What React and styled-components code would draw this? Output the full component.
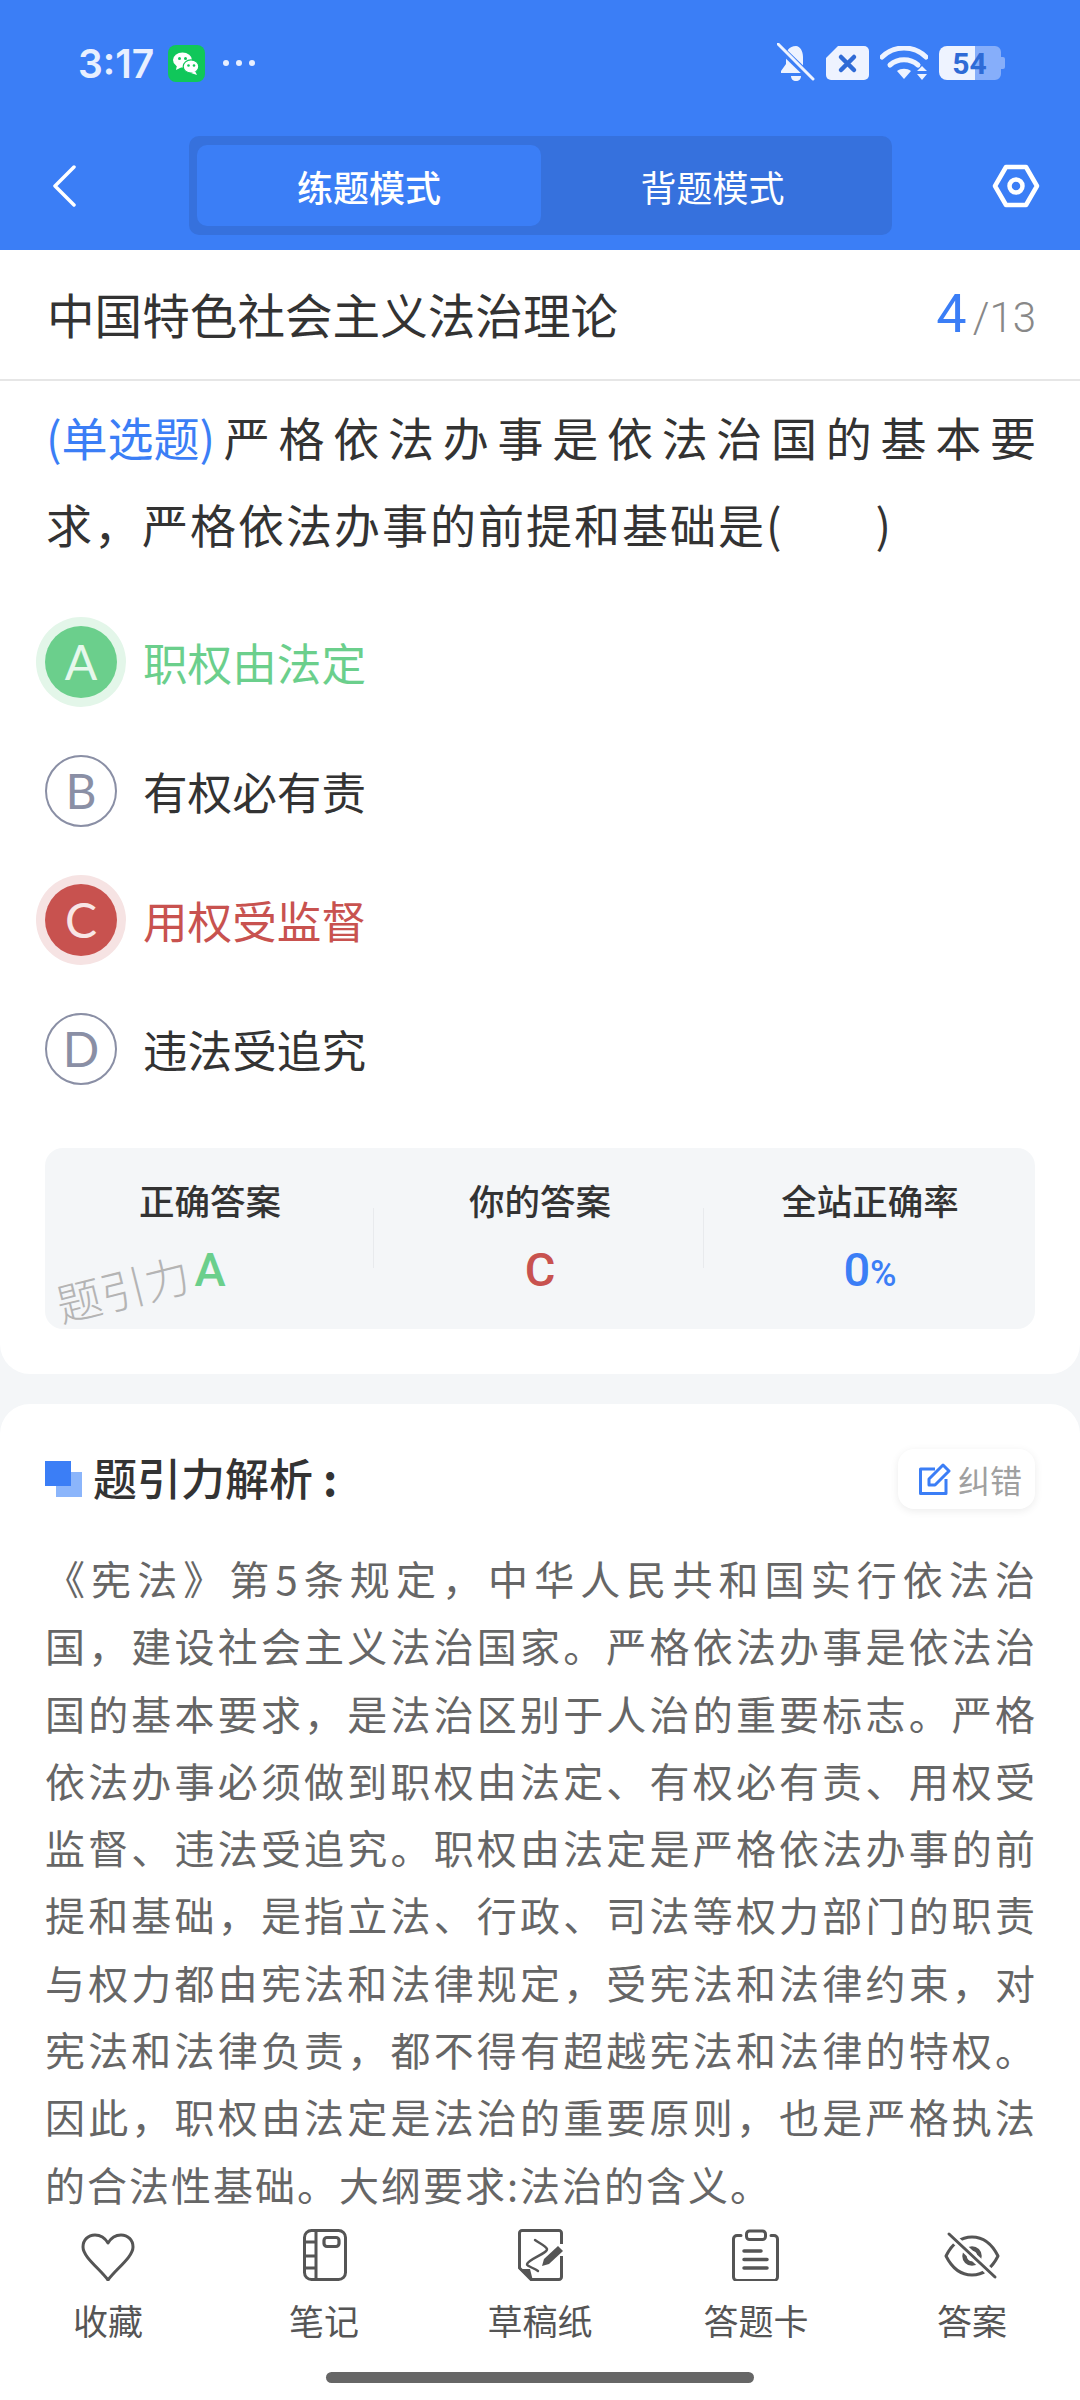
import React from "react";
import styled, { createGlobalStyle } from "styled-components";

const GlobalStyle = createGlobalStyle`
  html, body {
    margin: 0;
    padding: 0;
    background: #f4f6f8;
  }
  * {
    box-sizing: border-box;
  }
`;

const FONT = `"Noto Sans CJK SC", "Noto Sans", sans-serif`;
const BLUE = "#3b7ef6";
const GREEN = "#6bcf8c";
const RED = "#c8524f";

const Page = styled.div`
  width: 1080px;
  height: 2400px;
  display: flex;
  flex-direction: column;
  overflow: hidden;
  font-family: ${FONT};
  color: #333;
  background: #f4f6f8;
`;

const Header = styled.header`
  height: 250px;
  flex: none;
  background: ${BLUE};
  color: #fff;
`;

const StatusBar = styled.div`
  height: 136px;
  padding: 0 75px 10px 78px;
  display: flex;
  align-items: center;
  justify-content: space-between;
`;

const StatusGroup = styled.div`
  display: flex;
  align-items: center;
  gap: ${(p) => p.$gap}px;
`;

const Clock = styled.span`
  font-family: Inter, sans-serif;
  font-size: 39px;
  font-weight: 600;
  color: #e8efff;
`;

const Dots = styled.span`
  display: flex;
  gap: 7px;
  margin-left: 4px;
  i {
    width: 6px;
    height: 6px;
    border-radius: 50%;
    background: #e8efff;
  }
`;

const Battery = styled.div`
  position: relative;
  width: 66px;
  height: 34px;
  display: flex;
  align-items: center;
  justify-content: center;
  font-family: Roboto, sans-serif;
  font-size: 30px;
  font-weight: 700;
  color: #2f6bd6;
  svg {
    position: absolute;
    left: 0;
    top: 0;
  }
  span {
    position: relative;
    margin-right: 5px;
  }
`;

const NavRow = styled.div`
  height: 99px;
  padding-right: 40px;
  padding-left: 52px;
  display: grid;
  grid-template-columns: 137px 703px 1fr;
  align-items: center;
  svg {
    display: block;
  }
`;

const ModeTabs = styled.div`
  height: 99px;
  padding: 9px 8px;
  display: grid;
  grid-template-columns: 344px 1fr;
  background: #3671dd;
  border-radius: 10px;
`;

const ModeTab = styled.div`
  display: flex;
  align-items: center;
  justify-content: center;
  font-size: 36px;
  font-weight: ${(p) => (p.$active ? 500 : 400)};
  border-radius: 10px;
  background: ${(p) => (p.$active ? BLUE : "transparent")};
`;

const SettingsButton = styled.div`
  justify-self: end;
`;

const Main = styled.main`
  flex: 1;
  min-height: 0;
  overflow: hidden;
`;

const QuestionCard = styled.section`
  height: 1124px;
  background: #fff;
  border-radius: 0 0 30px 30px;
`;

const TitleRow = styled.div`
  height: 131px;
  padding: 0 44px 3px 47px;
  display: flex;
  align-items: center;
  justify-content: space-between;
  border-bottom: 2px solid #e6e6e6;
`;

const Title = styled.h1`
  margin: 0;
  font-size: 47.6px;
  font-weight: 400;
  color: #333;
`;

const Progress = styled.div`
  display: flex;
  align-items: baseline;
  font-family: Roboto, sans-serif;
  font-size: 42px;
  font-weight: 300;
  color: #888;
  b {
    font-size: 54px;
    font-weight: 400;
    color: ${BLUE};
    margin-right: 6px;
  }
`;

const Question = styled.div`
  padding: 12px 44px 0 46px;
  font-size: 46px;
  line-height: 87px;
  color: #333;
`;

const QuestionLine = styled.div`
  text-align: justify;
  text-align-last: ${(p) => (p.$last ? "left" : "justify")};
  letter-spacing: ${(p) => (p.$last ? "2px" : "0")};
  white-space: pre-wrap;
`;

const QuestionType = styled.span`
  display: inline-block;
  color: ${BLUE};
`;

const Blank = styled.span`
  display: inline-block;
  width: 92px;
`;

const Options = styled.div`
  margin-top: 30px;
`;

const Option = styled.div`
  height: 129px;
  padding-left: 45px;
  display: flex;
  align-items: center;
  gap: 26px;
  font-size: 44.6px;
  color: ${(p) => (p.$state === "right" ? GREEN : p.$state === "wrong" ? RED : "#333")};
`;

const OptionMark = styled.div`
  width: 72px;
  height: 72px;
  display: flex;
  align-items: center;
  justify-content: center;
  border-radius: 50%;
  font-family: Lato, sans-serif;
  font-size: 48px;
  font-weight: 400;
  ${(p) =>
    p.$state === "right"
      ? `background:${GREEN};color:#e6f8ec;box-shadow:0 0 0 9px #e3f6e9;`
      : p.$state === "wrong"
      ? `background:${RED};color:#f8e6e6;box-shadow:0 0 0 9px #f6e3e3;`
      : `border:2px solid #8a8fa5;color:#8a8fa5;`}
`;

const Stats = styled.div`
  position: relative;
  margin: 35px 45px 0;
  height: 181px;
  display: grid;
  grid-template-columns: repeat(3, 1fr);
  background: #f4f6f8;
  border-radius: 18px;
`;

const StatDivider = styled.div`
  position: absolute;
  top: 60px;
  left: ${(p) => p.$left}px;
  width: 1px;
  height: 60px;
  background: #e8eaed;
`;

const Stat = styled.div`
  display: flex;
  flex-direction: column;
  align-items: center;
  padding-top: 27px;
`;

const StatLabel = styled.div`
  font-size: 35.5px;
  line-height: 50px;
  font-weight: 500;
  color: #333;
`;

const StatValue = styled.div`
  margin-top: 20px;
  font-family: Roboto, sans-serif;
  font-size: 47px;
  line-height: 50px;
  font-weight: 500;
  color: ${(p) => p.$color};
  small {
    font-size: 36px;
  }
`;

const Watermark = styled.div`
  position: absolute;
  left: 10px;
  top: 118px;
  font-size: 45px;
  line-height: 44px;
  font-weight: 300;
  color: #b4b4b4;
  transform: rotate(-14deg);
`;

const AnalysisCard = styled.section`
  margin-top: 30px;
  height: 900px;
  padding: 45px 45px 0;
  background: #fff;
  border-radius: 30px 30px 0 0;
`;

const AnalysisHead = styled.div`
  height: 60px;
  display: flex;
  align-items: center;
`;

const HeadMark = styled.div`
  position: relative;
  width: 37px;
  height: 36px;
  margin-right: 11px;
  &::before,
  &::after {
    content: "";
    position: absolute;
    width: 26px;
    height: 25px;
  }
  &::after {
    left: 11px;
    top: 11px;
    background: #8bb5fb;
  }
  &::before {
    left: 0;
    top: 0;
    background: ${BLUE};
    z-index: 1;
  }
`;

const HeadTitle = styled.h2`
  margin: 0 0 5px;
  flex: 1;
  font-size: 44px;
  font-weight: 500;
  color: #333;
  span {
    margin-left: 10px;
    font-weight: 700;
  }
`;

const FixButton = styled.div`
  width: 137px;
  height: 60px;
  padding-left: 21px;
  display: flex;
  align-items: center;
  gap: 7px;
  background: #fff;
  border-radius: 16px;
  box-shadow: 0 2px 8px rgba(0, 0, 0, 0.08);
  font-size: 32px;
  color: #a0a0a0;
`;

const Analysis = styled.div`
  margin-top: 36px;
  font-size: 40px;
  line-height: 67.3px;
  color: #666;
`;

const AnalysisLine = styled.div`
  text-align: justify;
  text-align-last: ${(p) => (p.$last ? "left" : "justify")};
  letter-spacing: ${(p) => (p.$last ? "2px" : "0")};
`;

const TabBar = styled.nav`
  height: 179px;
  flex: none;
  position: relative;
  background: #fff;
  display: grid;
  grid-template-columns: repeat(5, 216px);
`;

const TabItem = styled.div`
  display: flex;
  flex-direction: column;
  align-items: center;
  padding-top: 8px;
  font-size: 35px;
  line-height: 50px;
  color: #555;
  svg {
    display: block;
    margin-bottom: 14px;
  }
`;

const HomeBar = styled.div`
  position: absolute;
  left: 326px;
  bottom: 17px;
  width: 428px;
  height: 11px;
  border-radius: 6px;
  background: #666;
`;

const BellOff = () => (
  <svg width="38" height="40" viewBox="0 0 38 40">
    <path d="M19 3c-7 0-10 5-10 11v7l-5 7v2h25l-3-4V14c0-6-3-11-7-11z" fill="#eef3ff" />
    <path d="M14 33h10c0 3-2 5-5 5s-5-2-5-5z" fill="#eef3ff" />
    <path d="M1 3l36 35" stroke={BLUE} strokeWidth="7" />
    <path d="M1 1l35 35" stroke="#eef3ff" strokeWidth="3" strokeLinecap="round" />
  </svg>
);

const SimX = () => (
  <svg width="43" height="34" viewBox="0 0 43 34">
    <path d="M12 0h26a5 5 0 0 1 5 5v24a5 5 0 0 1-5 5H5a5 5 0 0 1-5-5V12z" fill="#eef3ff" />
    <path d="M15 11l13 13M28 11L15 24" stroke="#2f6bd6" strokeWidth="4.5" strokeLinecap="round" />
  </svg>
);

const Wifi = () => (
  <svg width="48" height="34" viewBox="0 0 48 34">
    <path d="M2 11c12-12 32-12 44 0" fill="none" stroke="#eef3ff" strokeWidth="5" strokeLinecap="round" />
    <path d="M10 19c8-7 20-7 28 0" fill="none" stroke="#eef3ff" strokeWidth="5" strokeLinecap="round" />
    <path d="M17 25c4-3 10-3 14 0l-7 8z" fill="#eef3ff" />
    <path d="M42 20l5 5H37zM42 34l5-6H37z" fill="#eef3ff" />
  </svg>
);

const BackIcon = () => (
  <svg width="24" height="42" viewBox="0 0 24 42">
    <path d="M22 2L3 21l19 19" fill="none" stroke="#fff" strokeWidth="3.5" strokeLinecap="round" strokeLinejoin="round" />
  </svg>
);

const HexIcon = () => (
  <svg width="48" height="44" viewBox="0 0 48 44">
    <path d="M14 3h20l11 19-11 19H14L3 22z" fill="none" stroke="#fff" strokeWidth="4.5" strokeLinejoin="round" />
    <circle cx="24" cy="22" r="6.5" fill="none" stroke="#fff" strokeWidth="4.5" />
  </svg>
);

const WeChat = () => (
  <svg width="37" height="37" viewBox="0 0 37 37">
    <rect width="37" height="37" rx="8" fill="#10c75a" />
    <ellipse cx="14.5" cy="15" rx="9.5" ry="7.5" fill="#fff" />
    <path d="M9 20l-1 5 6-3z" fill="#fff" />
    <ellipse cx="23" cy="21.5" rx="7.8" ry="6.6" fill="#fff" stroke="#10c75a" strokeWidth="1.2" />
    <path d="M27 26l2 4-6-2z" fill="#fff" />
    <circle cx="11.5" cy="13.5" r="1.5" fill="#10c75a" />
    <circle cx="17.5" cy="13.5" r="1.5" fill="#10c75a" />
    <circle cx="20.5" cy="20.5" r="1.3" fill="#10c75a" />
    <circle cx="26" cy="20.5" r="1.3" fill="#10c75a" />
  </svg>
);

const EditIcon = () => (
  <svg width="32" height="32" viewBox="0 0 32 32">
    <path d="M16 6H1.5v24.5H27V16" fill="none" stroke={BLUE} strokeWidth="3" strokeLinejoin="round" />
    <path d="M10 22v-6L24 2l6 6-14 14z" fill="none" stroke={BLUE} strokeWidth="3" strokeLinejoin="round" />
  </svg>
);

const TAB_ICON = { fill: "none", stroke: "#555", strokeWidth: 3 };

const HeartIcon = () => (
  <svg width="56" height="52" viewBox="0 -3 56 52" {...TAB_ICON}>
    <path d="M28 48C20 37 3 25 3 15 3 8 8 3 15 3c6 0 10 3 13 8 3-5 7-8 13-8 7 0 12 5 12 12 0 10-17 22-25 33z" strokeLinejoin="round" />
  </svg>
);

const NoteIcon = () => (
  <svg width="56" height="52" viewBox="0 0 56 52" {...TAB_ICON}>
    <rect x="8.5" y="1.5" width="41" height="49" rx="7" />
    <path d="M20 2v48M9 13h11M9 27h11M9 39h11" />
    <rect x="28" y="8.5" width="15" height="9" rx="3" strokeWidth="3.2" />
  </svg>
);

const DraftIcon = () => (
  <svg width="56" height="52" viewBox="0 0 56 52" {...TAB_ICON}>
    <path d="M49.5 15V4a2.5 2.5 0 0 0-2.500-2.500H10A2.500 2.500 0 0 0 7.500 4v35L19 50.500h28a2.500 2.500 0 0 0 2.500-2.500V27" />
    <path d="M7 40l11 0 3 12z" fill="#555" stroke="none" />
    <path d="M23 11c4 3 11 6 12 9 1 4-18 10-20 15-1 2 7 4 11 7" strokeWidth="2.4" strokeLinecap="round" />
    <path d="M46 17l5 5-14 13-7 2 2-7z" fill="#555" stroke="none" />
  </svg>
);

const ClipboardIcon = () => (
  <svg width="56" height="52" viewBox="0 0 56 52" {...TAB_ICON}>
    <path d="M13 6.500H9A3.500 3.500 0 0 0 5.500 10v38A3.500 3.500 0 0 0 9 51.500h37a3.500 3.500 0 0 0 3.500-3.500V10A3.500 3.500 0 0 0 46 6.500h-3" strokeLinecap="round" />
    <rect x="18.500" y="2" width="19" height="8.500" rx="3" />
    <path d="M16 22h17M16 30.500h23M16 39h23" strokeWidth="3.500" strokeLinecap="round" />
  </svg>
);

const EyeOffIcon = () => (
  <svg width="56" height="52" viewBox="0 0 56 52" {...TAB_ICON}>
    <path d="M2 27c6-12 15-19 26-19s20 7 26 19c-6 12-15 19-26 19S8 39 2 27z" strokeLinejoin="round" />
    <circle cx="28" cy="27" r="7.500" strokeWidth="4.500" />
    <path d="M5 5l46 43" stroke="#fff" strokeWidth="8" />
    <path d="M5 5l46 43" strokeLinecap="round" />
  </svg>
);

const OPTIONS = [
  { key: "A", text: "职权由法定", state: "right" },
  { key: "B", text: "有权必有责" },
  { key: "C", text: "用权受监督", state: "wrong" },
  { key: "D", text: "违法受追究" },
];

const ANALYSIS = [
  "《宪法》第5条规定，中华人民共和国实行依法治",
  "国，建设社会主义法治国家。严格依法办事是依法治",
  "国的基本要求，是法治区别于人治的重要标志。严格",
  "依法办事必须做到职权由法定、有权必有责、用权受",
  "监督、违法受追究。职权由法定是严格依法办事的前",
  "提和基础，是指立法、行政、司法等权力部门的职责",
  "与权力都由宪法和法律规定，受宪法和法律约束，对",
  "宪法和法律负责，都不得有超越宪法和法律的特权。",
  "因此，职权由法定是法治的重要原则，也是严格执法",
  "的合法性基础。大纲要求:法治的含义。",
];

const TABS = [
  { label: "收藏", icon: <HeartIcon /> },
  { label: "笔记", icon: <NoteIcon /> },
  { label: "草稿纸", icon: <DraftIcon /> },
  { label: "答题卡", icon: <ClipboardIcon /> },
  { label: "答案", icon: <EyeOffIcon /> },
];

function App() {
  return (
    <Page>
      <GlobalStyle />
      <Header>
        <StatusBar>
          <StatusGroup $gap={14}>
            <Clock>3:17</Clock>
            <WeChat />
            <Dots>
              <i />
              <i />
              <i />
            </Dots>
          </StatusGroup>
          <StatusGroup $gap={11}>
            <BellOff />
            <SimX />
            <Wifi />
            <Battery>
              <svg width="66" height="34" viewBox="0 0 66 34">
                <path d="M36 0h20a6 6 0 0 1 6 6v5h2a2 2 0 0 1 2 2v8a2 2 0 0 1-2 2h-2v5a6 6 0 0 1-6 6H36z" fill="#86aefa" />
                <path d="M8 0h28v34H8a8 8 0 0 1-8-8V8a8 8 0 0 1 8-8z" fill="#eef3ff" />
              </svg>
              <span>54</span>
            </Battery>
          </StatusGroup>
        </StatusBar>
        <NavRow>
          <BackIcon />
          <ModeTabs>
            <ModeTab $active>练题模式</ModeTab>
            <ModeTab>背题模式</ModeTab>
          </ModeTabs>
          <SettingsButton>
            <HexIcon />
          </SettingsButton>
        </NavRow>
      </Header>
      <Main>
        <QuestionCard>
          <TitleRow>
            <Title>中国特色社会主义法治理论</Title>
            <Progress>
              <b>4</b>/13
            </Progress>
          </TitleRow>
          <Question>
            <QuestionLine>
              <QuestionType>(单选题)</QuestionType>严格依法办事是依法治国的基本要
            </QuestionLine>
            <QuestionLine $last>
              求，严格依法办事的前提和基础是(<Blank />)
            </QuestionLine>
          </Question>
          <Options>
            {OPTIONS.map((o) => (
              <Option key={o.key} $state={o.state}>
                <OptionMark $state={o.state}>{o.key}</OptionMark>
                {o.text}
              </Option>
            ))}
          </Options>
          <Stats>
            <Stat>
              <StatLabel>正确答案</StatLabel>
              <StatValue $color={GREEN}>A</StatValue>
            </Stat>
            <Stat>
              <StatLabel>你的答案</StatLabel>
              <StatValue $color={RED}>C</StatValue>
            </Stat>
            <Stat>
              <StatLabel>全站正确率</StatLabel>
              <StatValue $color={BLUE}>
                0<small>%</small>
              </StatValue>
            </Stat>
            <StatDivider $left={328} />
            <StatDivider $left={658} />
            <Watermark>题引力</Watermark>
          </Stats>
        </QuestionCard>
        <AnalysisCard>
          <AnalysisHead>
            <HeadMark />
            <HeadTitle>
              题引力解析<span>:</span>
            </HeadTitle>
            <FixButton>
              <EditIcon />
              纠错
            </FixButton>
          </AnalysisHead>
          <Analysis>
            {ANALYSIS.map((line, i) => (
              <AnalysisLine key={line} $last={i === ANALYSIS.length - 1}>
                {line}
              </AnalysisLine>
            ))}
          </Analysis>
        </AnalysisCard>
      </Main>
      <TabBar>
        {TABS.map((t) => (
          <TabItem key={t.label}>
            {t.icon}
            {t.label}
          </TabItem>
        ))}
        <HomeBar />
      </TabBar>
    </Page>
  );
}

export default App;
